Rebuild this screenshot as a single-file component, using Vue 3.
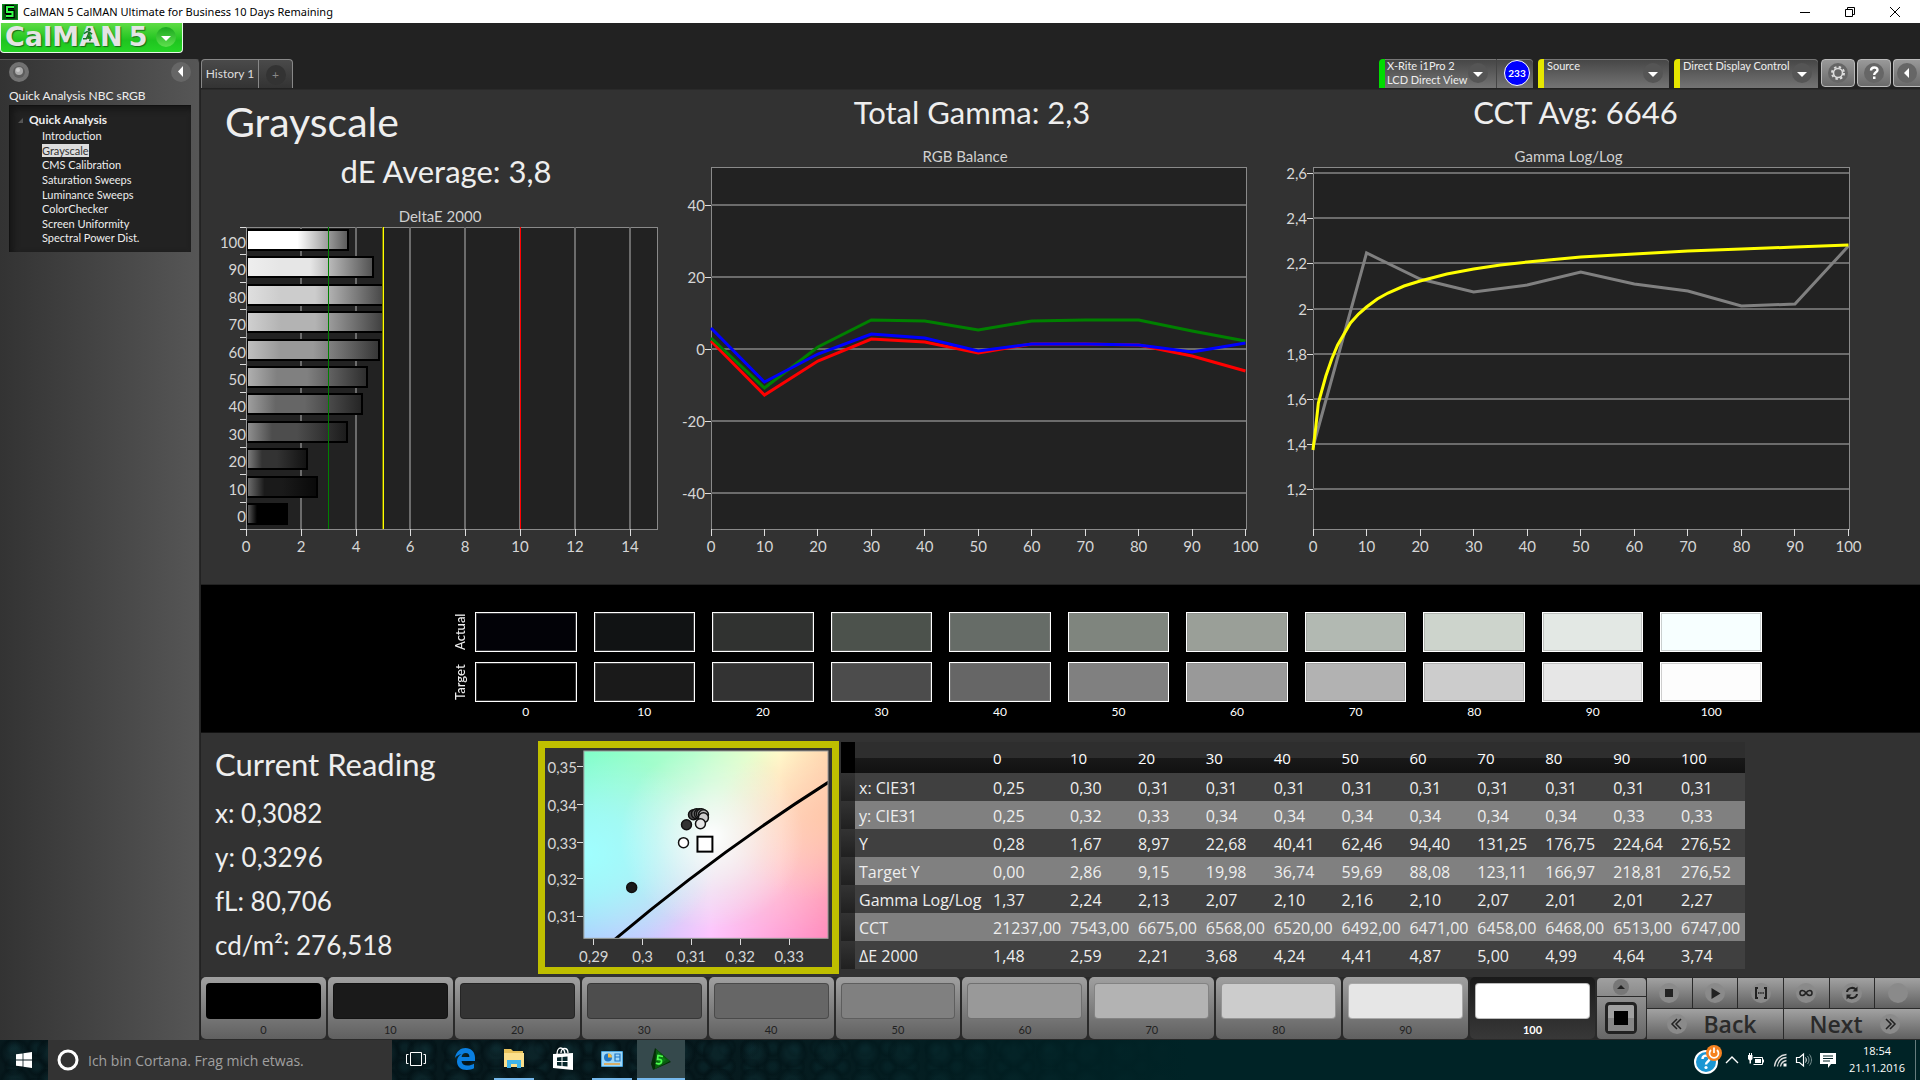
<script setup>
import { ref } from 'vue'

const levels = [0, 10, 20, 30, 40, 50, 60, 70, 80, 90, 100]
const pages = ['Introduction', 'Grayscale', 'CMS Calibration', 'Saturation Sweeps', 'Luminance Sweeps', 'ColorChecker', 'Screen Uniformity', 'Spectral Power Dist.']
const page = ref('Grayscale')
const selected = ref(100)

const grays = ['#000000', '#1a1a1a', '#333333', '#4d4d4d', '#666666', '#808080', '#999999', '#b3b3b3', '#cccccc', '#e6e6e6', '#ffffff']
const actual = ['#020207', '#111314', '#303230', '#4c524c', '#666c67', '#7f857e', '#9a9f98', '#b2b9b2', '#cdd4cc', '#e3e8e4', '#f7ffff']
const target = ['#000000', '#1a1a1a', '#333333', '#4c4c4c', '#666666', '#808080', '#999999', '#b2b2b2', '#cccccc', '#e6e6e6', '#fdfdfd']

const deltaE = [3.74, 4.64, 4.99, 5.0, 4.87, 4.41, 4.24, 3.68, 2.21, 2.59, 1.48]
const ex = v => Math.round(46 + v * 27.4)
const bars = deltaE.map((v, i) => ({
  level: 100 - i * 10,
  w: Math.round(v * 27.4),
  y: Math.round(3 + i * 27.4),
  fill: `url(#bar${10 - i})`
}))
const edges = Array.from({ length: 12 }, (_, i) => Math.round(1 + i * 27.45))
const mix = (hex, to, k) => {
  const g = parseInt(hex.slice(1, 3), 16)
  const v = Math.round(g + (to - g) * k)
  return `rgb(${v},${v},${v})`
}

const bx = i => 37 + i * 53.45
const by = v => Math.round(183 - v * 3.6)
const rgb = [
  { color: '#ff0000', ys: [175, 229, 195, 173, 176, 187, 178, 178, 179, 190, 205] },
  { color: '#008000', ys: [172, 222, 181, 154, 155, 164, 155, 154, 154, 165, 175] },
  { color: '#0000ff', ys: [162, 216, 188, 168, 172, 185, 178, 178, 179, 186, 177] }
]
const line = ys => ys.map((y, i) => `${bx(i)},${y}`).join(' ')

const gx = i => 49 + i * 53.55
const gammaTicks = ['2,6', '2,4', '2,2', '2', '1,8', '1,6', '1,4', '1,2'].map((t, i) => ({ t, y: Math.round(7 + i * 45.2) }))
const gammaLine = [281, 87, 113, 126, 119, 106, 118, 125, 140, 138, 80].map((y, i) => `${gx(i)},${y}`).join(' ')
const gammaTarget = [[0, 284], [0.5, 262], [1, 237], [2.4, 210], [3.5, 193], [4.6, 179], [7, 157], [8.5, 148], [10, 141], [12, 133], [14, 127], [17, 120], [20, 115], [25, 108], [30, 103], [35, 99], [40, 96], [50, 91], [60, 88], [70, 85], [80, 83], [90, 81], [100, 79]]
  .map(([v, y]) => `${gx(v / 10)},${y}`).join(' ')

const cieY = [['0,35', 26], ['0,34', 64], ['0,33', 102], ['0,32', 138], ['0,31', 176]]
const cieX = [['0,29', 56], ['0,3', 105], ['0,31', 154], ['0,32', 203], ['0,33', 252]]
const ciePoints = [[94, 147, 1], [149, 84, 2], [156, 74, 3], [159, 73, 4], [162, 73, 5], [164, 73, 6], [166, 74, 7], [166, 77, 8], [163, 83, 9], [146, 102, 10]]

const rows = [
  ['x: CIE31', '0,25', '0,30', '0,31', '0,31', '0,31', '0,31', '0,31', '0,31', '0,31', '0,31', '0,31'],
  ['y: CIE31', '0,25', '0,32', '0,33', '0,34', '0,34', '0,34', '0,34', '0,34', '0,34', '0,33', '0,33'],
  ['Y', '0,28', '1,67', '8,97', '22,68', '40,41', '62,46', '94,40', '131,25', '176,75', '224,64', '276,52'],
  ['Target Y', '0,00', '2,86', '9,15', '19,98', '36,74', '59,69', '88,08', '123,11', '166,97', '218,81', '276,52'],
  ['Gamma Log/Log', '1,37', '2,24', '2,13', '2,07', '2,10', '2,16', '2,10', '2,07', '2,01', '2,01', '2,27'],
  ['CCT', '21237,00', '7543,00', '6675,00', '6568,00', '6520,00', '6492,00', '6471,00', '6458,00', '6468,00', '6513,00', '6747,00'],
  ['ΔE 2000', '1,48', '2,59', '2,21', '3,68', '4,24', '4,41', '4,87', '5,00', '4,99', '4,64', '3,74']
]
</script>

<template>
  <div class="screen">
    <header class="titlebar">
      <svg class="appicon" viewBox="0 0 16 16"><rect width="16" height="16" fill="#0a8a1a" /><rect x="1" y="1" width="14" height="14" fill="#0b5a14" /><path d="M12 3H5v5h5.500v4H4" fill="none" stroke="#000" stroke-width="4.500" /><path d="M12 3H5v5h5.500v4H4" fill="none" stroke="#35ff4a" stroke-width="2" /></svg>
      <span class="wintitle">CalMAN 5 CalMAN Ultimate for Business 10 Days Remaining</span>
      <button class="win" aria-label="Minimize"><svg viewBox="0 0 12 12"><path d="M1 6.500h10" stroke="#000" /></svg></button>
      <button class="win" aria-label="Restore"><svg viewBox="0 0 12 12"><path d="M1.500 3.500h7v7h-7zM3.500 3v-1.500h7v7H9" fill="none" stroke="#000" /></svg></button>
      <button class="win" aria-label="Close"><svg viewBox="0 0 12 12"><path d="M1 1l10 10M11 1L1 11" stroke="#000" /></svg></button>
    </header>

    <div class="brandrow">
      <button class="brand">
        <span>CalMAN</span><span>5</span>
        <svg class="runner" viewBox="0 0 14 18"><circle cx="8.500" cy="3" r="2" /><path d="M2 8l4-2.500 3 1 3 2M8 6.500L6.500 11l3.500 2-1 4M6.500 11L5 14H1" fill="none" stroke="#17752a" stroke-width="1.700" /></svg>
        <svg class="menu" viewBox="0 0 20 20"><defs><linearGradient id="bg1" x2="0" y2="1"><stop stop-color="#19a81d" /><stop offset="1" stop-color="#5fe04e" /></linearGradient></defs><circle cx="10" cy="10" r="10" fill="url(#bg1)" /><path d="M5 9h10l-5 5z" fill="#fff" /></svg>
      </button>
    </div>

    <div class="body">
      <aside class="side">
        <div class="sidetop">
          <button class="orb" aria-label="Record"><svg viewBox="0 0 20 20"><circle cx="10" cy="10" r="10" fill="#727272" /><circle cx="10" cy="10" r="6" fill="#5c5c5c" /><circle cx="10" cy="9" r="4" fill="#aaa" /><circle cx="9" cy="8" r="2" fill="#ccc" /></svg></button>
          <button class="orb" aria-label="Collapse"><svg viewBox="0 0 20 20"><circle cx="10" cy="10" r="10" fill="#666" /><path d="M12 4v11L7 9.500z" fill="#fff" /></svg></button>
        </div>
        <p class="flow">Quick Analysis NBC sRGB</p>
        <nav class="tree">
          <p class="root"><svg viewBox="0 0 6 6"><path d="M6 0v6H0z" fill="#555" /></svg>Quick Analysis</p>
          <ul>
            <li v-for="p in pages" :key="p"><a href="#" :class="{ on: p === page }" @click.prevent="page = p">{{ p }}</a></li>
          </ul>
        </nav>
      </aside>

      <main class="main">
        <div class="tabs">
          <button class="tab">History 1</button>
          <button class="tab plus" aria-label="Add tab"><i>+</i></button>
          <span class="grow"></span>
          <div class="device">
            <button class="meter"><span>X-Rite i1Pro 2<br>LCD Direct View</span><svg class="drop" viewBox="0 0 20 20"><circle cx="10" cy="10" r="10" /><path d="M5 9h10l-5 5z" /></svg></button>
            <span class="count">233</span>
          </div>
          <div class="device src">
            <select aria-label="Source"><option>Source</option></select><svg class="drop" viewBox="0 0 20 20"><circle cx="10" cy="10" r="10" /><path d="M5 9h10l-5 5z" /></svg>
          </div>
          <div class="device ddc">
            <select aria-label="Display control"><option>Direct Display Control</option></select><svg class="drop" viewBox="0 0 20 20"><circle cx="10" cy="10" r="10" /><path d="M5 9h10l-5 5z" /></svg>
          </div>
          <button class="tool" aria-label="Settings"><svg viewBox="0 0 22 22"><circle cx="11" cy="11" r="10" fill="#666" /><circle cx="11" cy="11" r="4.500" fill="none" stroke="#ddd" stroke-width="1.600" /><circle cx="11" cy="11" r="6" fill="none" stroke="#ddd" stroke-width="2" stroke-dasharray="2.400 2.312" /></svg></button>
          <button class="tool" aria-label="Help"><svg viewBox="0 0 22 22"><circle cx="11" cy="11" r="10" fill="#666" /><path d="M8 8.500c0-4 6.500-4 6.500-.5 0 2.500-3.300 2.200-3.300 5" fill="none" stroke="#fff" stroke-width="2.400" /><rect x="10" y="14.500" width="2.500" height="2.500" fill="#fff" /></svg></button>
          <button class="tool last" aria-label="Collapse panel"><svg viewBox="0 0 22 22"><circle cx="11" cy="11" r="10" fill="#666" /><path d="M13 6v10l-5-5z" fill="#fff" /></svg></button>
        </div>

        <section class="charts">
          <div class="col c1">
            <h1>Grayscale</h1>
            <h2>dE Average: 3,8</h2>
            <h3>DeltaE 2000</h3>
            <svg class="plot" viewBox="1 0 474 334">
              <defs>
                <linearGradient v-for="(g, i) in grays" :id="'bar' + i" :key="g">
                  <stop offset="0" :stop-color="mix(g, 255, i > 8 ? 0.3 : 0.38)" />
                  <stop offset="0.25" :stop-color="g" />
                  <stop offset="0.5" :stop-color="g" />
                  <stop offset="1" :stop-color="mix(g, 0, 0.65)" />
                </linearGradient>
              </defs>
              <rect x="46" y="1" width="411" height="302" class="area" />
              <g class="grid"><line v-for="v in [2, 4, 6, 8, 12, 14]" :key="v" :x1="ex(v)" :x2="ex(v)" y1="1" y2="303" /></g>
              <g class="tick"><line v-for="y in edges" :key="y" x1="40" x2="46" :y1="y" :y2="y" /><line v-for="v in [0, 2, 4, 6, 8, 10, 12, 14]" :key="'t' + v" :x1="ex(v)" :x2="ex(v)" y1="303" y2="310" /></g>
              <rect v-for="b in bars" :key="b.level" x="47" :y="b.y + 1" :width="b.w - 1" height="20" :fill="b.fill" stroke="#000" stroke-width="2" />
              <g class="limit">
                <line :x1="ex(3)" :x2="ex(3)" y1="1" y2="303" stroke="#008000" />
                <line :x1="ex(5)" :x2="ex(5)" y1="1" y2="303" stroke="#777700" stroke-width="2" />
                <line :x1="ex(5)" :x2="ex(5)" y1="1" y2="303" stroke="#ffff00" />
                <line :x1="ex(10)" :x2="ex(10)" y1="1" y2="303" stroke="#777" stroke-width="2" />
                <line :x1="ex(10)" :x2="ex(10)" y1="1" y2="303" stroke="#ff0000" />
                <line x1="46" x2="46" y1="1" y2="303" stroke="#999" />
              </g>
              <g class="lab end"><text v-for="b in bars" :key="b.level" x="46" :y="b.y + 19">{{ b.level }}</text></g>
              <g class="lab mid"><text v-for="v in [0, 2, 4, 6, 8, 10, 12, 14]" :key="v" :x="ex(v)" y="326">{{ v }}</text></g>
            </svg>
          </div>

          <div class="col c2">
            <h2>Total Gamma: 2,3</h2>
            <h3>RGB Balance</h3>
            <svg class="plot" viewBox="1 0 590 394">
              <rect x="37" y="1" width="535" height="362" class="area" />
              <g class="grid"><line v-for="v in [40, 20, 0, -20, -40]" :key="v" x1="37" x2="572" :y1="by(v)" :y2="by(v)" /></g>
              <g class="tick"><line v-for="v in [40, 20, 0, -20, -40]" :key="v" x1="31" x2="37" :y1="by(v)" :y2="by(v)" /><line v-for="v in levels" :key="'t' + v" :x1="bx(v / 10)" :x2="bx(v / 10)" y1="363" y2="370" /></g>
              <polyline v-for="s in rgb" :key="s.color" :points="line(s.ys)" fill="none" :stroke="s.color" stroke-width="3" />
              <g class="lab end"><text v-for="v in [40, 20, 0, -20, -40]" :key="v" x="31" :y="by(v) + 6">{{ v }}</text></g>
              <g class="lab mid"><text v-for="v in levels" :key="v" :x="bx(v / 10)" y="386">{{ v }}</text></g>
            </svg>
          </div>

          <div class="col c3">
            <h2>CCT Avg: 6646</h2>
            <h3>Gamma Log/Log</h3>
            <svg class="plot" viewBox="1 0 655 394">
              <rect x="49" y="1" width="536" height="362" class="area" />
              <g class="grid"><line v-for="g in gammaTicks" :key="g.t" x1="49" x2="585" :y1="g.y" :y2="g.y" /></g>
              <g class="tick"><line v-for="g in gammaTicks" :key="g.t" x1="43" x2="49" :y1="g.y" :y2="g.y" /><line v-for="v in levels" :key="'t' + v" :x1="gx(v / 10)" :x2="gx(v / 10)" y1="363" y2="370" /></g>
              <polyline :points="gammaLine" fill="none" stroke="#808080" stroke-width="3" />
              <polyline :points="gammaTarget" fill="none" stroke="#ffff00" stroke-width="3" />
              <g class="lab end"><text v-for="g in gammaTicks" :key="g.t" x="43" :y="g.y + 6">{{ g.t }}</text></g>
              <g class="lab mid"><text v-for="v in levels" :key="v" :x="gx(v / 10)" y="386">{{ v }}</text></g>
            </svg>
          </div>
        </section>

        <section class="band">
          <span class="vert">Actual</span>
          <div class="swatches"><i v-for="c in actual" :key="c" :style="{ background: c }"></i></div>
          <span class="vert">Target</span>
          <div class="swatches"><i v-for="c in target" :key="c" :style="{ background: c }"></i></div>
          <span></span>
          <div class="swatches nums"><span v-for="v in levels" :key="v">{{ v }}</span></div>
        </section>

        <section class="lower">
          <div class="reading">
            <h2>Current Reading</h2>
            <p>x: 0,3082</p>
            <p>y: 0,3296</p>
            <p>fL: 80,706</p>
            <p>cd/m²: 276,518</p>
          </div>
          <div class="cie">
            <svg viewBox="0 0 302 234">
              <defs>
                <linearGradient id="top"><stop stop-color="#80ffc8" /><stop offset="0.45" stop-color="#b4ffcc" /><stop offset="0.8" stop-color="#ffffcc" /><stop offset="1" stop-color="#ffdcb0" /></linearGradient>
                <linearGradient id="bot"><stop stop-color="#aac8ff" /><stop offset="0.25" stop-color="#c8c8ff" /><stop offset="0.52" stop-color="#ffc4ff" /><stop offset="1" stop-color="#ff8cbe" /></linearGradient>
                <linearGradient id="fade" x2="0" y2="1"><stop stop-color="#000" /><stop offset="0.2" stop-color="#1a1a1a" /><stop offset="1" stop-color="#fff" /></linearGradient>
                <mask id="down"><rect x="46" y="10" width="245" height="188" fill="url(#fade)" /></mask>
                <radialGradient id="white" cx="0.5" cy="0.5" r="0.5"><stop stop-color="#fff" /><stop offset="0.2" stop-color="#fff" stop-opacity="0.7" /><stop offset="0.6" stop-color="#fff" stop-opacity="0.3" /><stop offset="1" stop-color="#fff" stop-opacity="0" /></radialGradient>
                <radialGradient id="cyan" cx="0" cy="0.55" r="0.55"><stop stop-color="#a0ffff" /><stop offset="0.4" stop-color="#a4ffff" stop-opacity="0.7" /><stop offset="1" stop-color="#b8ffff" stop-opacity="0" /></radialGradient>
                <radialGradient id="peach" cx="1" cy="0.35" r="0.45"><stop stop-color="#ffc8a8" stop-opacity="0.8" /><stop offset="1" stop-color="#ffc8b4" stop-opacity="0" /></radialGradient>
                <clipPath id="box"><rect x="46" y="10" width="245" height="188" /></clipPath>
              </defs>
              <rect x="46" y="10" width="245" height="188" fill="url(#top)" />
              <rect x="46" y="10" width="245" height="188" fill="url(#bot)" mask="url(#down)" />
              <rect x="46" y="10" width="245" height="188" fill="url(#cyan)" />
              <rect x="46" y="10" width="245" height="188" fill="url(#peach)" />
              <g clip-path="url(#box)">
                <circle cx="174" cy="96" r="92" fill="url(#white)" />
                <path d="M76 200Q180 112 292 41" fill="none" stroke="#000" stroke-width="3" />
              </g>
              <rect x="46" y="10" width="245" height="188" fill="none" stroke="#999" />
              <g class="tick"><line v-for="t in cieY" :key="t[0]" x1="39" x2="45" :y1="t[1]" :y2="t[1]" /><line v-for="t in cieX" :key="'x' + t[0]" :x1="t[1]" :x2="t[1]" y1="199" y2="205" /></g>
              <ellipse v-for="(p, i) in ciePoints" :key="i" :cx="p[0]" :cy="p[1]" rx="5" ry="5" :fill="grays[p[2]]" stroke="#111" stroke-width="1.500" />
              <rect x="160" y="96" width="15" height="15" fill="#fff" stroke="#000" stroke-width="2" />
              <g class="lab end"><text v-for="t in cieY" :key="t[0]" x="39" :y="t[1] + 6">{{ t[0] }}</text></g>
              <g class="lab mid"><text v-for="t in cieX" :key="t[0]" :x="t[1]" y="222">{{ t[0] }}</text></g>
            </svg>
          </div>
          <table>
            <colgroup><col class="cg"><col class="cl"><col class="cw"><col v-for="n in 10" :key="n"></colgroup>
            <thead><tr><th class="corner"></th><th></th><th v-for="v in levels" :key="v">{{ v }}</th></tr></thead>
            <tbody><tr v-for="r in rows" :key="r[0]"><td class="grip"></td><td v-for="(c, i) in r" :key="i">{{ c }}</td></tr></tbody>
          </table>
        </section>

        <section class="controls">
          <button v-for="(v, i) in levels" :key="v" class="level" :class="{ on: v === selected }" @click="selected = v">
            <i :style="{ background: grays[i] }"></i><span>{{ v }}</span>
          </button>
          <div class="pattern">
            <button aria-label="Up"><svg width="16" height="16" viewBox="0 0 16 16"><circle cx="8" cy="8" r="8" fill="#777" /><path d="M4 10h8L8 6z" fill="#222" /></svg></button>
            <button aria-label="Pattern window" class="pw"><svg width="32" height="32" viewBox="0 0 32 32"><rect x="1.500" y="1.500" width="29" height="29" rx="3" fill="#a0a0a0" stroke="#222" stroke-width="3" /><rect x="3" y="16" width="26" height="13" fill="#868686" /><rect x="9" y="9" width="14" height="14" fill="#000" /></svg></button>
          </div>
          <div class="transport">
            <div class="keys">
              <button aria-label="Stop"><svg viewBox="0 0 20 20"><circle cx="10" cy="10" r="10" /><path d="M6 6h8v8H6z" fill="#222" /></svg></button>
              <button aria-label="Play"><svg viewBox="0 0 20 20"><circle cx="10" cy="10" r="10" /><path d="M6.500 5v11l9-5.500z" fill="#222" /></svg></button>
              <button aria-label="Read series"><svg viewBox="0 0 20 20"><circle cx="10" cy="10" r="10" /><path d="M7 5H5v10h2M13 5h2v10h-2" fill="none" stroke="#222" stroke-width="2" /><path d="M7 10h6" stroke="#222" stroke-width="1.600" stroke-dasharray="1.500 0.700" /></svg></button>
              <button aria-label="Continuous"><svg viewBox="0 0 20 20"><circle cx="10" cy="10" r="10" /><path d="M10 10c-2-3-6-3.500-6 0s4 3 6 0 6-3.500 6 0-4 3-6 0z" fill="none" stroke="#222" stroke-width="1.600" /></svg></button>
              <button aria-label="Refresh"><svg viewBox="0 0 20 20"><circle cx="10" cy="10" r="10" /><path d="M5 9c.5-4 6-5.500 9-2.500M15 11c-.5 4-6 5.500-9 2.500" fill="none" stroke="#222" stroke-width="2" /><path d="M15.500 3.500v5h-5zM4.500 16.500v-5h5z" fill="#222" /></svg></button>
              <button aria-label="Blank"><svg viewBox="0 0 20 20"><circle cx="10" cy="10" r="10" /></svg></button>
            </div>
            <div class="step">
              <button class="back"><svg viewBox="0 0 20 20"><circle cx="10" cy="10" r="10" /><path d="M10 5l-5 5 5 5M14 5l-5 5 5 5" fill="none" stroke="#222" stroke-width="1.500" /></svg><span>Back</span></button>
              <button class="next"><span>Next</span><svg viewBox="0 0 20 20"><circle cx="10" cy="10" r="10" /><path d="M6 5l5 5-5 5M10 5l5 5-5 5" fill="none" stroke="#222" stroke-width="1.500" /></svg></button>
            </div>
          </div>
        </section>
      </main>
    </div>

    <footer class="taskbar">
      <button class="start" aria-label="Start"><svg width="16" height="16" viewBox="0 0 16 16"><path d="M0 2.300l6.600-.9v6.200H0zM7.400 1.300L16 0v7.600H7.400zM0 8.400h6.600v6.200L0 13.700zM7.400 8.400H16V16l-8.600-1.300z" fill="#fff" /></svg></button>
      <label class="search">
        <svg width="22" height="22" viewBox="0 0 22 22"><circle cx="11" cy="11" r="9" fill="none" stroke="#fff" stroke-width="3" /></svg>
        <input type="text" aria-label="Cortana" placeholder="Ich bin Cortana. Frag mich etwas.">
      </label>
      <button class="task" aria-label="Task view"><svg width="22" height="16" viewBox="0 0 22 16"><path d="M5.500 1.500h11v13h-11zM3.500 3.500h-2v9h2M18.500 3.500h2v9h-2" fill="none" stroke="#fff" /></svg></button>
      <button class="task" aria-label="Edge"><svg width="22" height="22" viewBox="0 0 22 22"><path d="M1 10C2 3 7 0 11.500 0 17 0 21 4 21 9.500V13H7.500c.3 3 2.700 4.500 6 4.500 2.500 0 4.500-.7 6.500-1.800v4.600c-2 1.100-4.500 1.700-7.200 1.700C7 22 3 18.500 3 13.500 3 10 5 7.500 7.500 6 5 6.500 2.500 8 1 10zm6.600-1h7.800c0-2.500-1.200-4-3.700-4-2.300 0-3.800 1.600-4.100 4z" fill="#0a7fe0" /></svg></button>
      <button class="task run" aria-label="Explorer"><svg width="22" height="20" viewBox="0 0 22 20"><path d="M1 0h7l2 2h10v16H1z" fill="#e8c25a" /><path d="M1 4h20v14H1z" fill="#fbe08c" /><path d="M4 19v-8h14v8h-4v-4H8v4z" fill="#3fb4ea" /></svg></button>
      <button class="task" aria-label="Store"><svg width="22" height="24" viewBox="0 0 22 24"><path d="M1 7l20-1v17L1 21z" fill="#fff" /><path d="M5 7c0-8 7-8 8 0M9 6c0-6 7-6 7 0" fill="none" stroke="#fff" stroke-width="1.300" /><path d="M5 10.500l4.500-.5v4H5zM10.500 10l5-.5V14h-5zM5 15h4.500v4L5 18.500zM10.500 15h5v4.500l-5-.5z" fill="#06262a" /></svg></button>
      <button class="task run" aria-label="Control panel"><svg width="22" height="16" viewBox="0 0 22 16"><rect width="22" height="16" rx="1" fill="#4aa3dc" /><rect x="1" y="1" width="20" height="14" fill="#9fd8f8" /><circle cx="7" cy="6.500" r="4" fill="#2277c4" /><path d="M7 6.500V2.500a4 4 0 0 1 4 4z" fill="#f6b93c" /><path d="M14 3h5v7h-5zM14 6h5" fill="none" stroke="#2277c4" stroke-width="1.200" /><path d="M3 13h16" stroke="#e9a13a" stroke-width="1.500" /></svg></button>
      <button class="task run active" aria-label="CalMAN"><svg width="22" height="24" viewBox="0 0 22 24"><path d="M5 1l16 14L3 23 1 17z" fill="#052c07" /><path d="M6 2l14 12L5 22z" fill="#0a5c10" /><path d="M8 5l8 8-8 6z" fill="#0c7c14" /><path d="M13 9.500L8 8.500l-.5 4c3-.5 4.500.5 4 2.500S8 17.500 6 16" fill="none" stroke="#4dff4d" stroke-width="1.700" /></svg></button>
      <span class="grow"></span>
      <svg class="badge" width="30" height="30" viewBox="0 0 30 30"><circle cx="13" cy="17" r="11" fill="#1b96d3" stroke="#fff" stroke-width="2" /><path d="M9.500 14c0-4.500 7-4.500 7 0 0 2.500-3.500 2.500-3.500 5.500" fill="none" stroke="#fff" stroke-width="2.400" /><circle cx="13" cy="22.500" r="1.600" fill="#fff" /><circle cx="21" cy="8" r="8" fill="#f58220" /><path d="M18 5a4.500 4.500 0 1 0 6 0M21 2.500V8" fill="none" stroke="#fff" stroke-width="1.700" /></svg>
      <svg class="tray" viewBox="0 0 16 16"><path d="M2 11l6-6 6 6" fill="none" stroke="#fff" stroke-width="1.400" /></svg>
      <svg class="tray" viewBox="0 0 16 16"><path d="M5.500 5.500h9v7h-9" fill="none" stroke="#fff" /><path d="M7 7h6v4H7zM15 7.500h1v3h-1zM0 3h4.500v4L3 8.500v3H1.500v-3L0 7zM1 1h1v2H1zM3 1h1v2H3z" fill="#fff" /></svg>
      <svg class="tray" viewBox="0 0 16 16"><path d="M2.500 14.500C3 8 8 3 14.500 2.500M5.500 14.500c.5-5 4-8.500 9-9M8.500 14.500c.5-3 3-5.500 6-6" fill="none" stroke="#ddd" stroke-width="1.300" /><path d="M11.500 14.500v-3h3v3z" fill="#fff" /></svg>
      <svg class="tray" viewBox="0 0 16 16"><path d="M.5 5.500h3l4-3.500v12l-4-3.500h-3z" fill="none" stroke="#fff" stroke-width="1.200" /><path d="M9.500 5.500c1 1.500 1 3.500 0 5" fill="none" stroke="#fff" /><path d="M11.500 4c2 2.500 2 5.500 0 8M13.500 2.500c2.600 3.500 2.600 7.500 0 11" fill="none" stroke="#7a9091" /></svg>
      <svg class="tray" viewBox="0 0 16 16"><path d="M0 1h16v11h-5l-3 4v-4H0z" fill="#fff" /><path d="M3 4h10M3 6.500h10M3 9h7" stroke="#012427" stroke-width="1.200" /></svg>
      <time class="clock">18:54<br>21.11.2016</time>
      <i class="peek"></i>
    </footer>
  </div>
</template>

<style>
body { margin: 0; background: #222; }
</style>

<style scoped>
* { box-sizing: border-box; }
.screen { display: flex; flex-direction: column; min-height: 100vh; background: #222; color: #eee; font-family: Lato, sans-serif; font-size: 12px; }
button, select, input { font: inherit; color: inherit; border: 0; padding: 0; margin: 0; background: none; }
h1, h2, h3, p, ul { margin: 0; padding: 0; font-weight: 400; list-style: none; }
svg { display: block; flex: none; overflow: visible; }
i { font-style: normal; }
.grow { flex: 1; }

.titlebar { display: flex; align-items: center; height: 23px; background: #fff; color: #000; padding: 0 3px 0 2px; font-family: "Noto Sans", sans-serif; font-size: 11px; }
.appicon { width: 16px; height: 16px; margin-right: 5px; }
.wintitle { flex: 1; }
.win { width: 45px; height: 23px; display: flex; align-items: center; justify-content: center; }
.win svg { width: 12px; height: 12px; }

.brandrow { height: 36px; flex: none; display: flex; align-items: flex-start; }
.brand { position: relative; display: flex; align-items: center; gap: 6px; width: 183px; height: 30px; padding: 0 0 2px 4px; background: linear-gradient(#5fdc45, #1fc41f 60%, #25d525); border: solid #e8f8e8; border-width: 0 1px 1px; border-radius: 0 0 4px 4px; font-family: "DejaVu Sans", sans-serif; font-weight: 700; font-size: 27px; line-height: 32px; color: #e4e4e4; text-shadow: 1px 1px 1px #186a18; }
.brand .menu { width: 20px; height: 20px; margin-left: 3px; }
.brand .runner { position: absolute; left: 81px; top: 4px; width: 12px; height: 15px; fill: #17752a; }

.body { flex: 1; display: flex; }
.side { width: 200px; flex: none; border-top: 1px solid #555; border-right: 1px solid #2b2b2b; border-radius: 0 4px 0 0; background: linear-gradient(90deg, #333, #565656); padding: 2px 8px 0 9px; }
.sidetop { display: flex; justify-content: space-between; }
.orb svg { width: 20px; height: 20px; }
.flow { line-height: 16px; margin-top: 6px; font-size: 12px; }
.tree { height: 147px; margin-top: 1px; background: #222; border: solid #111; border-width: 1px 0 0 1px; padding: 6px 0 0 8px; box-shadow: inset 3px 3px 6px #151515; }
.root { display: flex; align-items: center; gap: 6px; font-weight: 700; line-height: 16px; }
.root svg { width: 5px; height: 5px; }
.tree ul { display: grid; grid-auto-rows: 1fr; height: 117px; margin-top: 1px; padding-left: 24px; font-size: 11px; line-height: 14px; }
.tree a { color: #eee; text-decoration: none; }
.tree a.on { background: #ddd; color: #333; }

.main { flex: 1; min-width: 0; display: flex; flex-direction: column; padding-left: 1px; }
.tabs { display: flex; height: 30px; font-size: 12px; }
.tab { width: 58px; height: 29px; border: 1px solid #888; border-bottom: 0; border-radius: 4px 0 0 0; background: linear-gradient(#4a4a4a, #333); color: #ddd; padding-bottom: 1px; }
.plus { width: 34px; border-left: 0; border-radius: 0 4px 0 0; }
.plus i { display: block; width: 20px; height: 20px; margin: 2px auto 0; border-radius: 50%; background: #333; line-height: 20px; color: #888; }
.device { position: relative; display: flex; width: 154px; height: 29px; margin-right: 5px; border-radius: 4px 4px 0 0; background: linear-gradient(#454545, #747474); box-shadow: inset 0 1px #777; border-left: 6px solid #0d0; font-size: 11px; line-height: 14px; }
.meter { display: flex; align-items: flex-start; width: 112px; border-right: 1px solid #444; padding: 0 8px 0 2px; text-align: left; white-space: nowrap; justify-content: space-between; }
.count { width: 26px; height: 26px; margin: 1px 0 0 7px; border-radius: 50%; border: 1px solid #fff; background: #00f; color: #fff; font-size: 10px; font-weight: 700; line-height: 24px; text-align: center; }
.drop { width: 20px; height: 20px; margin-top: 4px; fill: #fff; }
.drop circle { fill: #555; }
.device > .drop { position: absolute; right: 6px; top: 0; pointer-events: none; }
.src { width: 131px; border-left-color: #e6e600; }
.ddc { width: 144px; margin-right: 3px; border-left-color: #e6e600; }
.device select { flex: 1; appearance: none; height: 14px; padding-left: 3px; outline: 0; }
.tool { width: 34px; height: 28px; margin-right: 2px; display: flex; align-items: center; justify-content: center; border: 1px solid #bbb; border-radius: 4px; background: linear-gradient(#999, #6a6a6a); }
.tool svg { width: 22px; height: 22px; }
.tool.last { width: 27px; margin: 0; border-right: 0; border-radius: 4px 0 0 4px; }

.charts { display: grid; grid-template-columns: 474fr 590fr 655fr; min-height: 495px; border-top: 1px solid #2a2a2a; background: #323232; padding-top: 2px; margin-bottom: 1px; }
h1 { font-size: 41px; line-height: 48px; padding: 6px 0 5px 24px; }
h2 { font-size: 31px; line-height: 40px; text-align: center; }
h3 { font-size: 15px; line-height: 20px; margin-top: 14px; text-align: center; color: #d0d0d0; }
.c1 h2 { padding-left: 16px; }
.c1 h3 { margin-top: 15px; padding-left: 4px; }
.c2 h2 { padding-left: 4px; }
.c2 h3 { padding-right: 10px; }
.c3 h2 { padding-right: 34px; }
.c3 h3 { padding-right: 48px; }
.plot { width: 100%; }
.area { fill: #222; stroke: #8a8a8a; }
.grid line { stroke: #6c6c6c; stroke-width: 2; }
.tick line { stroke: #ddd; stroke-width: 1; }
.area, .grid line, .tick line, .limit line { shape-rendering: crispEdges; }
.lab text { fill: #d6d6d6; font-size: 15px; }
.end text { text-anchor: end; }
.mid text { text-anchor: middle; }

.band { display: grid; grid-template-columns: 20px 1fr; grid-template-rows: 40px 40px 20px; row-gap: 10px; column-gap: 4px; min-height: 148px; padding: 27px 158px 0 250px; background: #000; border-bottom: 1px solid #111; }
.vert { writing-mode: vertical-rl; transform: rotate(180deg); text-align: center; font-size: 13px; font-weight: 500; line-height: 18px; }
.swatches { display: grid; grid-template-columns: repeat(11, 1fr); gap: 17px; }
.swatches i { border: 1px solid #fff; box-shadow: inset 0 0 0 1px #8886; }
.nums { text-align: center; line-height: 16px; font-size: 12px; margin-top: -8px; color: #fff; }

.lower { display: flex; align-items: flex-start; min-height: 244px; padding-top: 8px; background: #323232; }
.reading { width: 337px; padding-left: 14px; }
.reading h2 { text-align: left; line-height: 40px; margin-top: 3px; }
.reading p { font-size: 26px; line-height: 44px; }
.reading p:nth-of-type(1) { margin-top: 7px; }
.cie { width: 301px; flex: none; background: #323232; outline: 7px solid #bfbf00; outline-offset: -7px; }
table { width: 904px; flex: none; margin: 1px 0 0 2px; border-collapse: collapse; table-layout: fixed; font-family: "Open Sans", sans-serif; font-size: 16px; }
.cg { width: 14px; }
.cl { width: 134px; }
.cw { width: 77px; }
th, td { padding: 2px 0 0 4px; text-align: left; font-weight: 400; white-space: nowrap; height: 28px; line-height: 26px; }
th { height: 31px; padding-top: 0; font-size: 15px; background: linear-gradient(#2e2e2e 50%, #191919 50%, #111); color: #fff; }
td { background: #404040; color: #eee; }
tr:nth-child(even) td { background: #808080; }
th.corner { background: #000; }
tbody tr td.grip { background: linear-gradient(#333, #202020); }

.controls { display: flex; height: 63px; gap: 2px; background: #2a2a2a; padding-bottom: 1px; }
.level { flex: 1; height: 62px; display: flex; flex-direction: column; padding: 6px 5px 0; border-radius: 5px; background: linear-gradient(#a0a0a0, #606060); color: #222; font-size: 11px; line-height: 14px; }
.level i { height: 36px; border-radius: 4px; border: 1px solid #0004; margin-bottom: 4px; }
.level.on { background: linear-gradient(#1a1a1a, #383838); color: #fff; font-weight: 700; }
.pattern { width: 49px; display: flex; flex-direction: column; gap: 1px; padding-top: 1px; }
.pattern button { height: 18px; display: flex; align-items: center; justify-content: center; background: linear-gradient(#a0a0a0, #8a8a8a); border-radius: 4px 4px 0 0; }
.pattern .pw { height: 42px; background: linear-gradient(#909090, #666); border-radius: 0 0 4px 4px; }
.transport { width: 273px; padding-top: 1px; display: grid; grid-template-rows: 30px 30px; gap: 1px; margin-left: -1px; }
.keys, .step { display: grid; gap: 1px; }
.keys { grid-template-columns: repeat(6, 1fr); }
.step { grid-template-columns: 1fr 1fr; }
.transport button { display: flex; align-items: center; justify-content: center; background: linear-gradient(#a2a2a2, #606060); }
.transport svg { width: 20px; height: 20px; fill: #8a8a8a; }
.step button { gap: 16px; font: 600 23px/28px "Open Sans", sans-serif; color: #2a2a2a; }
.step .back { padding-right: 6px; }
.step .next { gap: 18px; padding-left: 6px; }

.taskbar { display: flex; height: 40px; flex: none; background-color: #002326; background-image: linear-gradient(90deg, #00232600 35%, #002326 62%), radial-gradient(circle at 40% 45%, #12343a66 20%, #02101488 50%, #0c2a3000 62%), radial-gradient(circle at 60% 40%, #0d2d3366 15%, #01101480 45%, #0c2a3000 60%), linear-gradient(#07191d, #07191d); background-size: auto, 37px 29px, 23px 19px, auto; font-family: "Open Sans", sans-serif; }
.taskbar button { display: flex; align-items: center; justify-content: center; }
.start { width: 48px; }
.search { width: 344px; display: flex; align-items: center; gap: 9px; padding-left: 9px; background: #333; font-size: 14px; }
.search input { flex: 1; min-width: 0; }
.search input::placeholder { color: #a0a0a0; opacity: 1; }
.task { width: 48px; border: solid transparent; border-width: 0 4px 2px; margin-right: 1px; }
.run { border-bottom-color: #76b9ed; background-clip: padding-box; border-left: 0; border-right: 0; width: 40px; margin: 0 5px 0 4px; }
.active { background-color: #35494c; width: 48px; margin: 0; }
.badge { align-self: center; margin-right: 1px; }
.tray { width: 16px; height: 16px; align-self: center; margin-right: 8px; }
.clock { width: 76px; margin-left: -5px; font-size: 11px; line-height: 17px; padding-top: 2px; text-align: center; color: #fff; }
.peek { width: 5px; border-left: 1px solid #667c7e; }
</style>
